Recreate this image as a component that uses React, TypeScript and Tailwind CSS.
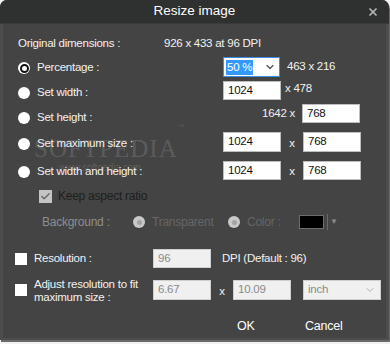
import { Check, ChevronDown, X } from "lucide-react";

const font = { fontFamily: '"Liberation Sans", Arial, sans-serif' };

const Radio = ({ selected = false, disabled = false }: { selected?: boolean; disabled?: boolean }) => (
  <span
    className={`w-[12px] h-[12px] rounded-full flex items-center justify-center shrink-0 ${
      disabled ? "bg-[#c9c9c9]" : "bg-white"
    }`}
  >
    {selected && <span className="w-[9px] h-[9px] rounded-full border-[2px] border-[#111] bg-white" />}
    {disabled && <span className="w-[5px] h-[5px] rounded-full bg-[#a3a3a3]" />}
  </span>
);

const Box = ({ value, w = "w-[58px]", h = "h-[20px]", disabled = false }: { value: string; w?: string; h?: string; disabled?: boolean }) => (
  <div
    className={`${w} ${h} border flex items-center px-[4px] ${
      disabled ? "bg-[#f0f0f0] border-[#cfcfcf] text-[#8a8a8a]" : "bg-white border-[#bdbdbd] text-[#111]"
    }`}
  >
    {value}
  </div>
);

export default function App() {
  return (
    <div className="w-[390px] h-[344px] bg-[#f2f2f2] overflow-hidden" style={font}>
      <div className="relative w-[389px] h-[340px] rounded-t-[7px] bg-[#444444] border-l-[3px] border-r-[3px] border-b-[2px] border-[#4d4d4d] shadow-[1px_2px_0_#6a6a6a] flex flex-col text-[11.5px] tracking-[-0.25px] text-[#f2f2f2]">
        {/* title bar */}
        <div className="h-[24px] -mx-[3px] rounded-t-[7px] bg-[#2f3131] border-b border-[#3a3a3a] flex items-center justify-center relative">
          <span className="text-[13.5px] tracking-normal text-white">Resize image</span>
          <X className="absolute right-[10px] top-[6px] w-[12px] h-[12px] text-[#b5b5b5]" strokeWidth={3.5} />
        </div>

        {/* watermark */}
        <div className="absolute left-[31px] top-[130px] text-[25px] tracking-[1px] text-white/15 pointer-events-none" style={{ fontFamily: '"Liberation Serif", serif' }}>
          SOFTPEDIA<sup className="text-[7px] align-top">™</sup>
        </div>
        <div className="absolute left-[56px] top-[160px] text-[10px] text-white/15 pointer-events-none">www.softpedia.com</div>

        <div className="pl-[15px] pt-[12px] flex flex-col">
          <div className="flex h-[16px] items-center">
            <span className="w-[146px]">Original dimensions :</span>
            <span>926 x 433 at 96 DPI</span>
          </div>

          {/* Percentage */}
          <div className="flex h-[20px] mt-[5px] items-center">
            <div className="w-[205px] flex items-center gap-[7px] pt-[2px]">
              <Radio selected />
              <span>Percentage :</span>
            </div>
            <div className="w-[57px] h-[20px] border border-[#3c8fe6] bg-white flex items-center justify-between pl-[2px] pr-[3px]">
              <span className="bg-[#3399ff] text-white px-[1px] leading-[15px]">50 %</span>
              <ChevronDown className="w-[12px] h-[12px] text-[#555]" strokeWidth={2.5} />
            </div>
            <span className="ml-[7px]">463 x 216</span>
          </div>

          {/* Set width */}
          <div className="flex h-[19px] mt-[4px] items-center">
            <div className="w-[205px] flex items-center gap-[7px] pt-[5px]">
              <Radio />
              <span>Set width :</span>
            </div>
            <Box value="1024" h="h-[19px]" />
            <span className="ml-[4px] -mt-[3px]">x 478</span>
          </div>

          {/* Set height */}
          <div className="flex h-[19px] mt-[4px] items-center">
            <div className="w-[244px] flex items-center gap-[7px] pt-[8px]">
              <Radio />
              <span>Set height :</span>
            </div>
            <span className="w-[40px]">1642 x</span>
            <Box value="768" h="h-[19px]" />
          </div>

          {/* Set maximum size */}
          <div className="flex h-[20px] mt-[9px] items-center">
            <div className="w-[205px] flex items-center gap-[7px] pt-[4px]">
              <Radio />
              <span>Set maximum size :</span>
            </div>
            <Box value="1024" />
            <span className="w-[22px] text-center pt-[3px]">x</span>
            <Box value="768" />
          </div>

          {/* Set width and height */}
          <div className="flex h-[19px] mt-[9px] items-center">
            <div className="w-[205px] flex items-center gap-[7px] pt-[3px]">
              <Radio />
              <span>Set width and height :</span>
            </div>
            <Box value="1024" h="h-[19px]" />
            <span className="w-[22px] text-center pt-[3px]">x</span>
            <Box value="768" h="h-[19px]" />
          </div>

          {/* Keep aspect ratio */}
          <div className="flex h-[14px] mt-[9px] items-center pl-[21px] gap-[6px]">
            <span className="w-[13px] h-[13px] bg-[#c4c4c4] flex items-center justify-center">
              <Check className="w-[11px] h-[11px] text-[#666]" strokeWidth={3} />
            </span>
            <span className="text-[#1e1e1e] text-[12px]">Keep aspect ratio</span>
          </div>

          {/* Background */}
          <div className="flex h-[16px] mt-[11px] items-center pl-[24px]">
            <span className="w-[91px] text-[#8e8e8e] text-[12px]">Background :</span>
            <Radio disabled />
            <span className="ml-[7px] w-[76px] text-[#666] text-[12px]">Transparent</span>
            <Radio disabled />
            <span className="ml-[7px] w-[52px] text-[#666] text-[12px]">Color :</span>
            <span className="w-[25px] h-[14px] bg-black border border-[#6c6c6c]" />
            <span className="ml-[3px] w-px h-[16px] bg-[#6a6a6a]" />
            <span className="ml-[2px] text-[#8a8a8a] text-[8px]">▼</span>
          </div>

          {/* Resolution */}
          <div className="flex h-[19px] mt-[19px] -ml-[3px] items-center">
            <span className="w-[12px] h-[12px] bg-white" />
            <span className="ml-[7px] w-[119px]">Resolution :</span>
            <Box value="96" disabled h="h-[19px]" />
            <span className="ml-[11px]">DPI (Default : 96)</span>
          </div>

          {/* Adjust resolution */}
          <div className="flex h-[20px] mt-[12px] -ml-[3px] items-center">
            <span className="w-[12px] h-[12px] bg-white" />
            <span className="ml-[7px] w-[119px] leading-[13px] pt-[1px] whitespace-nowrap">
              Adjust resolution to fit
              <br />
              maximum size :
            </span>
            <Box value="6.67" disabled />
            <span className="w-[22px] text-center pt-[3px]">x</span>
            <Box value="10.09" disabled />
            <div className="ml-[12px] w-[78px] h-[20px] border border-[#cfcfcf] bg-[#f0f0f0] flex items-center justify-between px-[4px] text-[#8a8a8a]">
              <span>inch</span>
              <ChevronDown className="w-[12px] h-[12px] text-[#b0b0b0]" strokeWidth={2} />
            </div>
          </div>

          {/* Buttons */}
          <div className="flex mt-[17px] pl-[219px] text-[12.5px] text-white">
            <span className="w-[68px]">OK</span>
            <span>Cancel</span>
          </div>
        </div>
      </div>
    </div>
  );
}
